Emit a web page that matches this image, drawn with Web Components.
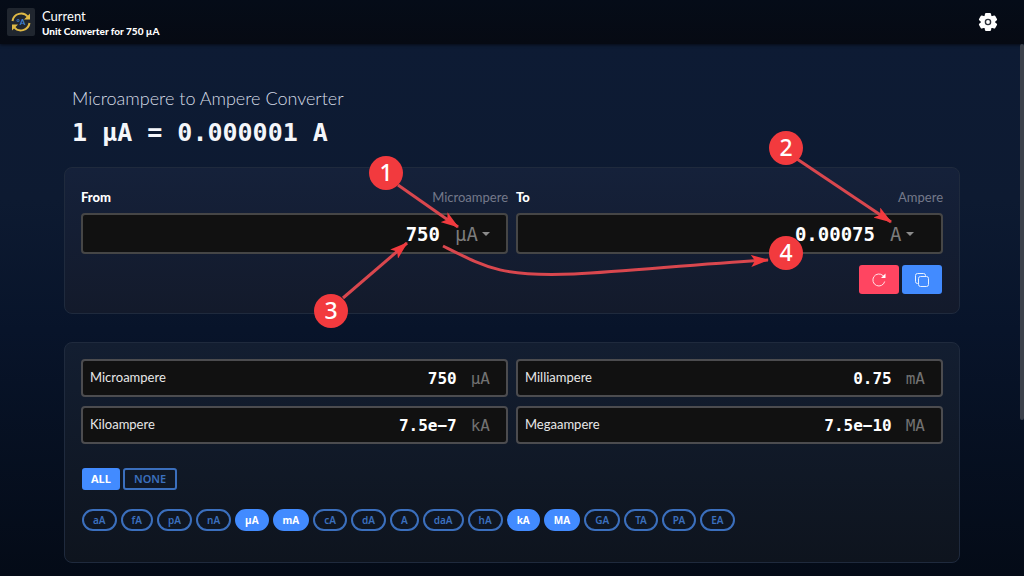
<!DOCTYPE html>
<html lang="en">
<head>
  <meta charset="utf-8">
  <meta name="viewport" content="width=device-width, initial-scale=1">
  <title>Current - Unit Converter</title>
  <style>
    html {
      min-height: 100%;
      background: #050b16;
    }

    body {
      margin: 0;
      min-height: 100vh;
      overflow: hidden;
      font-family: Lato, 'Noto Sans', sans-serif;
      color: #fff;
      background: linear-gradient(#0d1b34 44px, #0d1a31 200px, #08142a 330px, #040b17 100%);
    }
  </style>
</head>
<body>
  <converter-app></converter-app>

  <script>
    class AppHeader extends HTMLElement {
      constructor() {
        super();

        const shadow = this.attachShadow({ mode: 'open' });

        shadow.innerHTML = `
          <header>
            <a class="logo" href="#" aria-label="Home">
              <svg viewBox="0 0 28 28" width="28" height="28">
                <g fill="none" stroke="#dfb945" stroke-width="2">
                  <path d="M5.500 13a8.700 8.700 0 0 1 15.500-4"/>
                  <path d="M22.500 15a8.700 8.700 0 0 1-15.500 4"/>
                </g>
                <path d="M23 5.500v6h-6z" fill="#dfb945"/>
                <path d="M5 22.500v-6h6z" fill="#dfb945"/>
                <text x="14" y="17" text-anchor="middle" font-size="8" font-weight="700" fill="#3f82d8">°A</text>
              </svg>
            </a>
            <div class="names">
              <slot name="title"></slot>
              <slot name="subtitle"></slot>
            </div>
            <button type="button" aria-label="Settings">
              <svg viewBox="0 0 20 20" width="20" height="20">
                <path fill="#fff" stroke="#fff" stroke-width="2" stroke-linejoin="round" d="M8 2h4l.6 2.600 1.200.7 2.600-.8 1.700 3-1.900 1.800v1.400l1.900 1.800-1.700 3-2.600-.8-1.200.7L12 18H8l-.6-2.600-1.200-.7-2.600.8-1.700-3 1.900-1.800V9.300L1.900 7.500l1.700-3 2.600.8 1.200-.7z"/>
                <circle cx="10" cy="10" r="2.600" fill="none" stroke="#2a2f38" stroke-width="1.400"/>
              </svg>
            </button>
          </header>

          <style>
            :host {
              display: block;
            }

            header {
              display: flex;
              align-items: center;
              gap: 7px;
              height: 44px;
              padding: 0 26px 0 7px;
              box-sizing: border-box;
              background: linear-gradient(#050c18, #060a13);
              box-shadow: 0 1px 3px rgba(0, 0, 0, 0.6);
            }

            .logo {
              display: flex;
              border-radius: 2px;
              background: #20262f;
            }

            .names {
              display: flex;
              flex-direction: column;
              flex: 1;
              padding-top: 2px;
            }

            ::slotted([slot='title']) {
              font: 13px/15px Lato, sans-serif;
            }

            ::slotted([slot='subtitle']) {
              font: 900 10px/14px Lato, sans-serif;
            }

            button {
              display: flex;
              padding: 0;
              border: 0;
              background: none;
              cursor: pointer;
            }
          </style>
        `;
      }
    }

    class GlassPanel extends HTMLElement {
      constructor() {
        super();

        const shadow = this.attachShadow({ mode: 'open' });

        shadow.innerHTML = `
          <slot></slot>

          <style>
            :host {
              display: block;
              padding: 16px;
              border: 1px solid #1f2a3d;
              border-radius: 8px;
              background: linear-gradient(var(--panel-top, #15213a), var(--panel-bottom, #131a2b));
            }
          </style>
        `;
      }
    }

    // Large field with a unit drop-down
    class UnitInput extends HTMLElement {
      constructor() {
        super();

        const shadow = this.attachShadow({ mode: 'open' });
        const { label, name, value, unit } = this.dataset;

        shadow.innerHTML = `
          <div class="top">
            <label for="value">${label}</label>
            <label class="name" for="unit">${name}</label>
          </div>
          <div class="box">
            <input id="value" type="text" value="${value}">
            <span class="pick">
              <select id="unit"><option>${unit}</option></select>
              <svg viewBox="0 0 8 4" width="8" height="4"><path d="M0 0h8L4 4z" fill="#8b8b8b"/></svg>
            </span>
          </div>

          <style>
            :host {
              display: block;
              min-width: 0;
            }

            .top {
              display: flex;
              justify-content: space-between;
              margin-bottom: 8px;
              font-size: 13px;
              line-height: 16px;
            }

            label {
              font-weight: 900;
            }

            .name {
              font-weight: 400;
              color: #74798a;
            }

            .box {
              display: flex;
              align-items: center;
              height: 41px;
              margin-bottom: 1px;
              padding: 0 15px 0 8px;
              box-sizing: border-box;
              border: 2px solid #464646;
              border-radius: 4px;
              background: #111;
            }

            input,
            select {
              appearance: none;
              padding: 0;
              border: 0;
              outline: 0;
              background: none;
              font: 19px/24px 'DejaVu Sans Mono', monospace;
            }

            input {
              flex: 1;
              min-width: 0;
              text-align: right;
              font-weight: 700;
              color: #fff;
            }

            .pick {
              display: flex;
              align-items: center;
              gap: 4px;
              width: 36px;
              margin-left: 15px;
            }

            select {
              color: #7c7c7c;
            }
          </style>
        `;
      }
    }

    // Compact result row
    class UnitResult extends HTMLElement {
      constructor() {
        super();

        const shadow = this.attachShadow({ mode: 'open' });
        const { name, value, unit } = this.dataset;

        shadow.innerHTML = `
          <label for="value">${name}</label>
          <input id="value" type="text" readonly value="${value}">
          <span>${unit}</span>

          <style>
            :host {
              display: flex;
              align-items: center;
              min-width: 0;
              height: 38px;
              padding: 0 16px 0 7px;
              box-sizing: border-box;
              border: 2px solid #4c4c4f;
              border-radius: 4px;
              background: #111;
            }

            label {
              padding-bottom: 2px;
              font-size: 13px;
              line-height: 16px;
              color: #e8e8e8;
            }

            input,
            span {
              padding: 1px 0 0;
              font: 16px/20px 'DejaVu Sans Mono', monospace;
            }

            input {
              flex: 1;
              min-width: 0;
              border: 0;
              outline: 0;
              background: none;
              text-align: right;
              font-weight: 700;
              color: #fff;
            }

            span {
              margin-left: 14px;
              color: #727272;
            }
          </style>
        `;
      }
    }

    class UnitFilter extends HTMLElement {
      constructor() {
        super();

        const shadow = this.attachShadow({ mode: 'open' });
        const active = this.dataset.active.split(' ');
        const chips = this.dataset.units.split(' ').map((unit) =>
          `<button type="button" class="chip" aria-pressed="${active.includes(unit)}">${unit}</button>`
        );

        shadow.innerHTML = `
          <div class="row">
            <button type="button" class="all">ALL</button>
            <button type="button">NONE</button>
          </div>
          <div class="row chips">${chips.join('')}</div>

          <style>
            :host {
              display: block;
            }

            .row {
              display: flex;
              flex-wrap: wrap;
              gap: 3px;
              padding-left: 1px;
            }

            .chips {
              gap: 4px;
              margin-top: 19px;
            }

            button {
              height: 22px;
              padding: 0 9px;
              box-sizing: border-box;
              border: 2px solid #3b6fbd;
              border-radius: 3px;
              background: none;
              font: 600 11px/16px 'Noto Sans', sans-serif;
              color: #3b6fbd;
              cursor: pointer;
            }

            .chip {
              border-radius: 11px;
              font-size: 10px;
            }

            .all,
            [aria-pressed='true'] {
              padding: 0 8px;
              border-color: #428bff;
              background: #428bff;
              font-weight: 700;
              color: #fff;
            }

            .all {
              padding: 0 7px;
            }
          </style>
        `;

        shadow.querySelectorAll('.chip').forEach((chip) => {
          chip.addEventListener('click', () => {
            chip.setAttribute('aria-pressed', chip.getAttribute('aria-pressed') !== 'true');
          });
        });
      }
    }

    // Numbered steps and arrows drawn over the form
    class StepGuide extends HTMLElement {
      constructor() {
        super();

        const shadow = this.attachShadow({ mode: 'open' });
        const steps = [[322, 129], [722, 104], [267, 267], [722, 209]];
        const badges = steps.map(([x, y], i) => `
          <circle cx="${x}" cy="${y}" r="17"/>
          <text x="${x}" y="${y + 8}">${i + 1}</text>
        `);

        shadow.innerHTML = `
          <svg viewBox="0 0 896 320" width="896" height="320">
            <defs>
              <marker id="head" viewBox="0 0 18 12" refX="17" refY="6" markerWidth="18" markerHeight="12" markerUnits="userSpaceOnUse" orient="auto">
                <path d="M0 0L18 6L0 12L4 6z" fill="#f23a3e"/>
              </marker>
            </defs>
            <g fill="none" stroke="#d9474e" stroke-width="3">
              <path d="M334 141L394 183" marker-end="url(#head)"/>
              <path d="M733 115L827 178" marker-end="url(#head)"/>
              <path d="M279 254L343 199" marker-end="url(#head)"/>
              <path d="M379 202C423 224 438 233 510 230C570 227 630 220 704 216" marker-end="url(#head)"/>
            </g>
            ${badges.join('')}
          </svg>

          <style>
            :host {
              position: absolute;
              inset: 0 0 auto 0;
              pointer-events: none;
            }

            svg {
              display: block;
              overflow: visible;
            }

            circle {
              fill: #f23a3e;
            }

            text {
              font: 500 23px 'Noto Sans', sans-serif;
              text-anchor: middle;
              fill: #fff;
            }
          </style>
        `;
      }
    }

    class ConverterApp extends HTMLElement {
      constructor() {
        super();

        const shadow = this.attachShadow({ mode: 'open' });

        shadow.innerHTML = `
          <app-header>
            <span slot="title">Current</span>
            <span slot="subtitle">Unit Converter for 750 µA</span>
          </app-header>

          <div class="thumb"></div>

          <main>
            <h1>Microampere to Ampere Converter</h1>
            <p class="formula">1 µA = 0.000001 A</p>

            <glass-panel class="convert">
              <div class="grid">
                <unit-input data-label="From" data-name="Microampere" data-value="750" data-unit="µA"></unit-input>
                <unit-input data-label="To" data-name="Ampere" data-value="0.00075" data-unit="A"></unit-input>
              </div>
              <div class="actions">
                <button type="button" class="reset" aria-label="Reset">
                  <svg viewBox="0 0 16 16" width="16" height="16" fill="none" stroke="#ffe3e8">
                    <path d="M13.700 9.500A6 6 0 1 1 12 3.600L13.500 5"/>
                    <path d="M14.500 1.500V6H10z" fill="#fff" stroke="none"/>
                  </svg>
                </button>
                <button type="button" class="copy" aria-label="Copy">
                  <svg viewBox="0 0 16 16" width="16" height="16" fill="none" stroke="#e6f0ff">
                    <rect x="4.500" y="4.500" width="10" height="10" rx="2"/>
                    <path d="M4.500 11.500h-1a2 2 0 0 1-2-2v-6a2 2 0 0 1 2-2h6a2 2 0 0 1 2 2v1"/>
                  </svg>
                </button>
              </div>
            </glass-panel>

            <glass-panel class="results">
              <div class="grid">
                <unit-result data-name="Microampere" data-value="750" data-unit="µA"></unit-result>
                <unit-result data-name="Milliampere" data-value="0.75" data-unit="mA"></unit-result>
                <unit-result data-name="Kiloampere" data-value="7.5e−7" data-unit="kA"></unit-result>
                <unit-result data-name="Megaampere" data-value="7.5e−10" data-unit="MA"></unit-result>
              </div>
              <unit-filter
                data-units="aA fA pA nA µA mA cA dA A daA hA kA MA GA TA PA EA"
                data-active="µA mA kA MA"></unit-filter>
            </glass-panel>

            <step-guide></step-guide>
          </main>

          <style>
            :host {
              display: block;
              position: relative;
            }

            main {
              position: relative;
              max-width: 896px;
              margin: 0 auto;
              padding-top: 42px;
            }

            h1 {
              margin: 0 8px;
              font-size: 18px;
              font-weight: 300;
              line-height: 24px;
              color: #d5dbe6;
            }

            .formula {
              margin: 7px 8px 18px;
              font: 700 25px/32px 'DejaVu Sans Mono', monospace;
              color: #f4f6fa;
            }

            .grid {
              display: grid;
              grid-template-columns: 1fr 1fr;
              gap: 9px 8px;
            }

            .convert {
              padding: 21px 16px 19px;
            }

            .results {
              --panel-top: #131e31;
              --panel-bottom: #0e141e;
              margin-top: 28px;
              padding-bottom: 31px;
            }

            .actions {
              display: flex;
              justify-content: flex-end;
              gap: 3px;
              margin: 10px 1px 0 0;
            }

            .actions button {
              display: flex;
              align-items: center;
              justify-content: center;
              width: 40px;
              height: 29px;
              padding: 0;
              border: 0;
              border-radius: 3px;
              cursor: pointer;
            }

            .reset {
              background: #ff4561;
            }

            .copy {
              background: #428bff;
            }

            unit-filter {
              margin-top: 24px;
            }

            .thumb {
              position: absolute;
              top: 44px;
              right: 0;
              width: 4px;
              height: 376px;
              border-radius: 2px;
              background: #3c414b;
            }
          </style>
        `;
      }
    }

    customElements.define('app-header', AppHeader);
    customElements.define('glass-panel', GlassPanel);
    customElements.define('unit-input', UnitInput);
    customElements.define('unit-result', UnitResult);
    customElements.define('unit-filter', UnitFilter);
    customElements.define('step-guide', StepGuide);
    customElements.define('converter-app', ConverterApp);
  </script>
</body>
</html>
